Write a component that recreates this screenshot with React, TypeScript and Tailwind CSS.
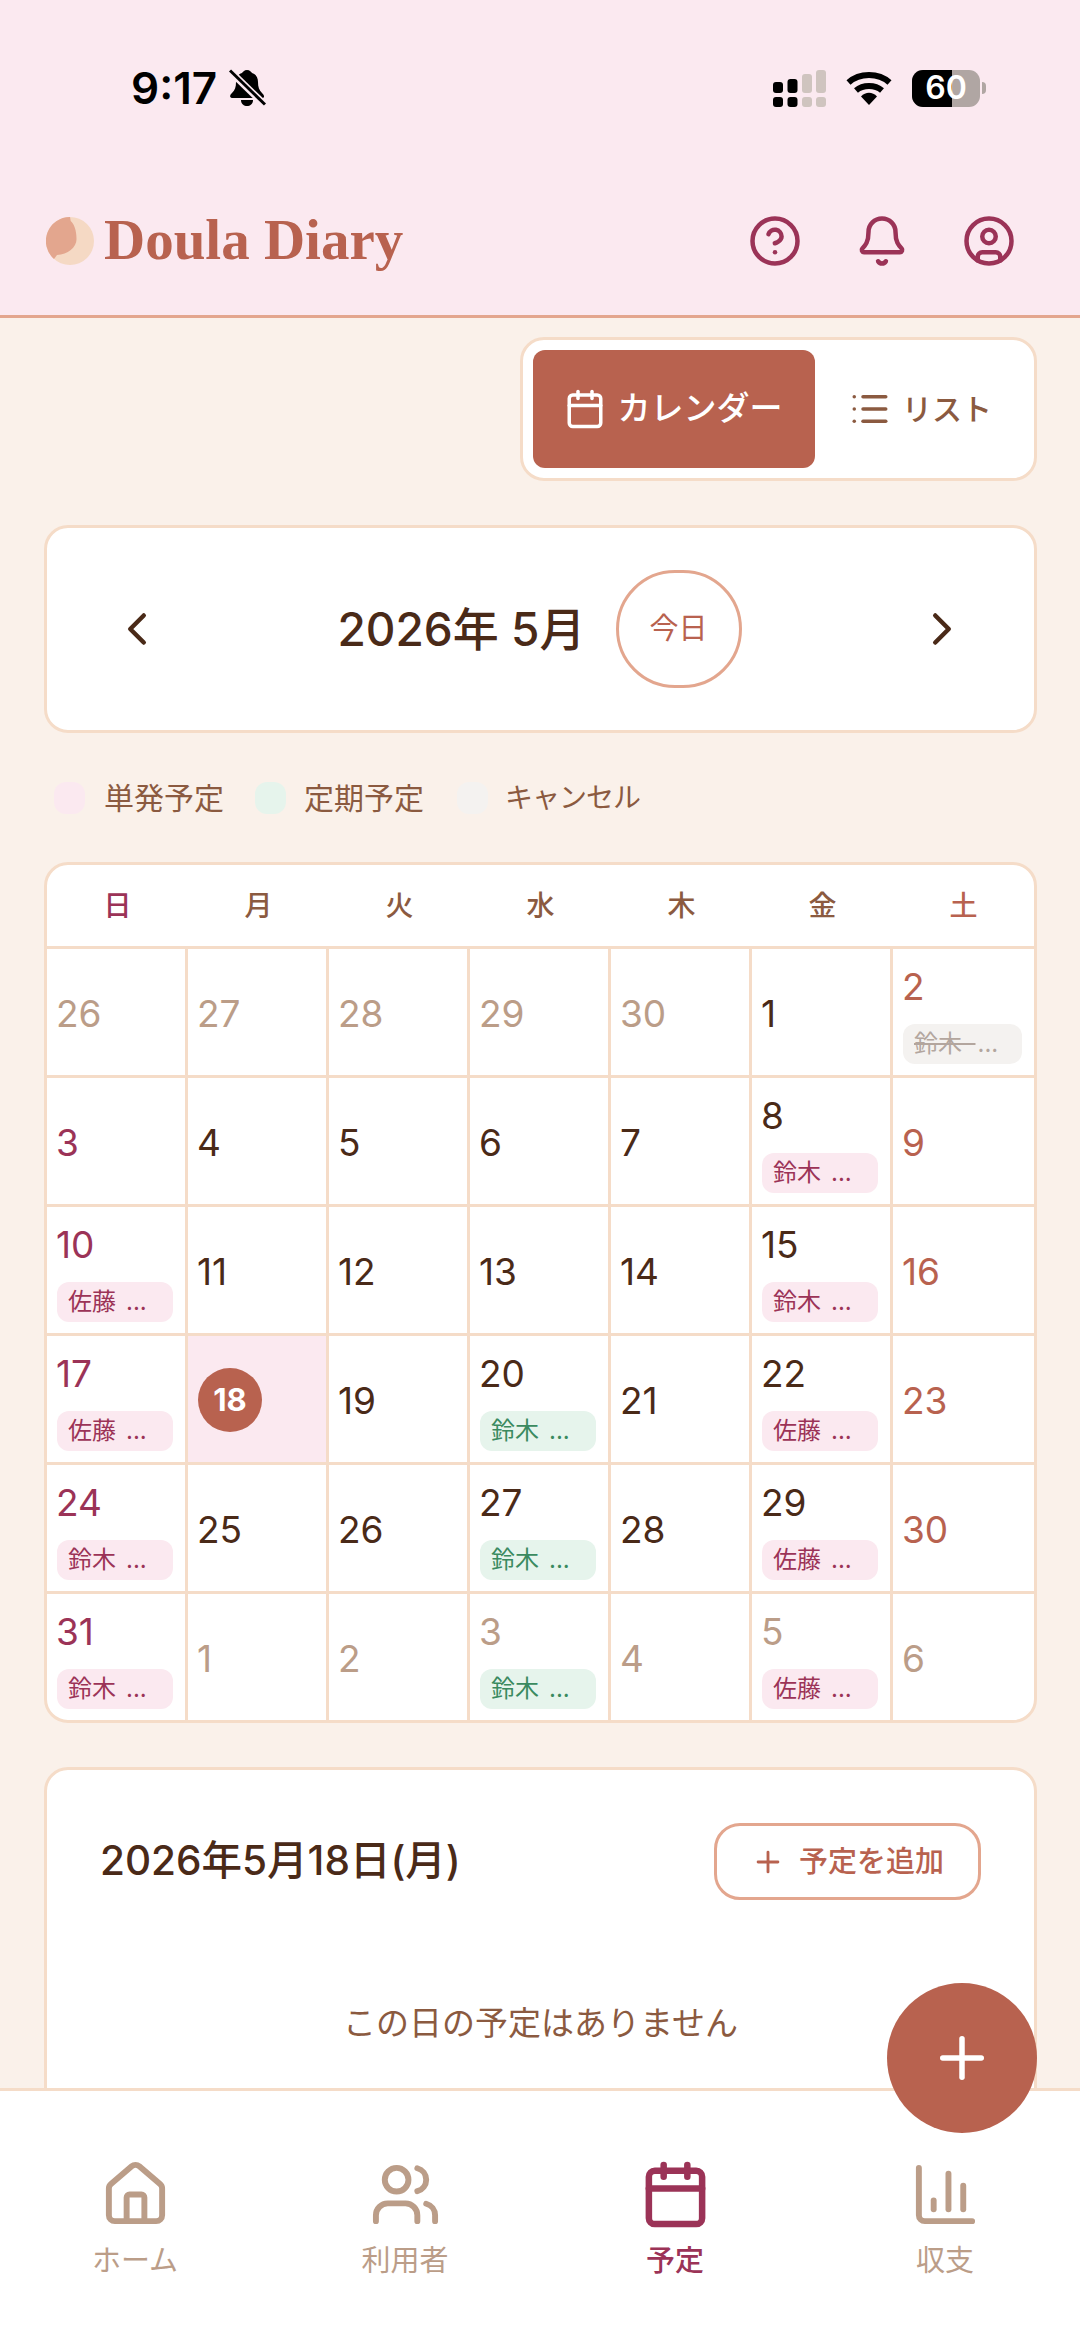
import React from "react";
import { ChevronLeft, ChevronRight, CircleQuestionMark, Bell, CircleUser, Calendar, List, Plus, House, Users, ChartColumn } from "lucide-react";

type Chip = { name: string; kind: "pink" | "green" | "cancel" };
type Day = { n: number; muted?: boolean; chip?: Chip; today?: boolean };

const S: Chip = { name: "佐藤", kind: "pink" };
const P: Chip = { name: "鈴木", kind: "pink" };
const G: Chip = { name: "鈴木", kind: "green" };
const X: Chip = { name: "鈴木", kind: "cancel" };

const days: Day[] = [
  { n: 26, muted: true }, { n: 27, muted: true }, { n: 28, muted: true }, { n: 29, muted: true }, { n: 30, muted: true }, { n: 1 }, { n: 2, chip: X },
  { n: 3 }, { n: 4 }, { n: 5 }, { n: 6 }, { n: 7 }, { n: 8, chip: P }, { n: 9 },
  { n: 10, chip: S }, { n: 11 }, { n: 12 }, { n: 13 }, { n: 14 }, { n: 15, chip: P }, { n: 16 },
  { n: 17, chip: S }, { n: 18, today: true }, { n: 19 }, { n: 20, chip: G }, { n: 21 }, { n: 22, chip: S }, { n: 23 },
  { n: 24, chip: P }, { n: 25 }, { n: 26 }, { n: 27, chip: G }, { n: 28 }, { n: 29, chip: S }, { n: 30 },
  { n: 31, chip: P }, { n: 1, muted: true }, { n: 2, muted: true }, { n: 3, muted: true, chip: G }, { n: 4, muted: true }, { n: 5, muted: true, chip: S }, { n: 6, muted: true },
];

function ChipView({ chip }: { chip: Chip }) {
  if (chip.kind === "cancel") {
    return (
      <div className="mt-[10px] flex h-[40px] w-full items-center overflow-hidden whitespace-pre rounded-[12px] bg-[#f4f2f0] pl-[11px] text-[24px] text-[#b3a69e]">
        <span className="line-through">{chip.name + "\u00a0\u00a0"}</span>
        <span className="ml-[2px]">...</span>
      </div>
    );
  }
  const cls = chip.kind === "pink" ? "bg-[#fbe9f0] text-[#9b3357]" : "bg-[#e6f4ec] text-[#3a8a5f]";
  return (
    <div className={`mt-[10px] flex h-[40px] w-full items-center overflow-hidden whitespace-pre rounded-[12px] pl-[11px] text-[24px] ${cls}`}>
      <span>{chip.name}</span>
      <span className="ml-[10px]">...</span>
    </div>
  );
}

function Cell({ d, col, last }: { d: Day; col: number; last: boolean }) {
  let color = "text-[#4a2a18]";
  if (d.muted) color = "text-[#bb9d88]";
  else if (col === 0) color = "text-[#9b3357]";
  else if (col === 6) color = "text-[#b8624f]";
  return (
    <div
      className={`flex flex-col justify-center border-[#f5dcc8] pl-[10px] pr-[12px] ${col < 6 ? "border-r-[3px]" : ""} ${last ? "h-[126px]" : "h-[129px] border-b-[3px]"} ${d.today ? "bg-[#fbe9f0]" : ""}`}
    >
      {d.today ? (
        <div className="mt-[2px] flex h-[64px] w-[64px] items-center justify-center rounded-full bg-[#b8624f] text-[31px] font-bold text-white">{d.n}</div>
      ) : (
        <div className={`-ml-[1px] h-[54px] text-[37px] leading-[54px] ${d.chip ? "" : "mt-[3px]"} ${color}`}>{d.n}</div>
      )}
      {d.chip && <ChipView chip={d.chip} />}
    </div>
  );
}

function Signal() {
  const black = "#000";
  const gray = "#cfc4bf";
  return (
    <svg width="53" height="37" viewBox="0 0 53 37">
      <rect x="0" y="12" width="10" height="11" rx="3" fill={black} />
      <rect x="14.5" y="9" width="10" height="14" rx="3" fill={black} />
      <rect x="29" y="4" width="10" height="19" rx="3" fill={gray} />
      <rect x="43" y="0" width="10" height="23" rx="3" fill={gray} />
      <rect x="0" y="27" width="10" height="10" rx="3" fill={black} />
      <rect x="14.5" y="27" width="10" height="10" rx="3" fill={black} />
      <rect x="29" y="27" width="10" height="10" rx="3" fill={gray} />
      <rect x="43" y="27" width="10" height="10" rx="3" fill={gray} />
    </svg>
  );
}

function Wifi() {
  return (
    <svg width="46" height="34" viewBox="0 0 46 34" fill="none">
      <path d="M2.5 11.5C13.5 1.5 32.5 1.5 43.5 11.5" stroke="#000" strokeWidth="6" />
      <path d="M10 19.5C17 13.5 29 13.5 36 19.5" stroke="#000" strokeWidth="6" />
      <path d="M15 25.5C19.5 20.5 26.5 20.5 31 25.5L23 34Z" fill="#000" />
    </svg>
  );
}

function BellOff() {
  return (
    <svg width="37" height="38" viewBox="0 0 37 38">
      <path d="M18 1c3 0 4 2 5 3 4 1 6 5 6 9 0 5 1 8 4 11 2 2 3 4 1 5H3c-3-1-2-3 0-5 3-3 4-6 4-11 0-4 2-8 6-9 1-1 2-3 5-3z" fill="#000" />
      <path d="M12 31h12c0 4-3 6-6 6s-6-2-6-6z" fill="#000" />
      <path d="M1 2l35 34" stroke="#fbe9f0" strokeWidth="7" />
      <path d="M1 1.5l35 34" stroke="#000" strokeWidth="3" />
    </svg>
  );
}

function Battery() {
  return (
    <div className="flex items-center">
      <div className="relative h-[37px] w-[68px] overflow-hidden rounded-[11px] bg-[#b0a6a3]">
        <div className="absolute left-0 top-0 h-full w-[40px] bg-black" />
        <div className="absolute inset-0 flex items-center justify-center text-[32px] font-semibold text-white">60</div>
      </div>
      <div className="ml-[2px] h-[12px] w-[4px] rounded-r-full bg-[#b0a6a3]" />
    </div>
  );
}

function Logo() {
  return (
    <svg width="48" height="48" viewBox="0 0 48 48">
      <circle cx="24" cy="24" r="24" fill="#f5d9c4" />
      <path d="M24 0A24 24 0 0 0 8 42L11 38C22 38 31 30 30.5 21.7 30.5 13 28 7 24.7 4Z" fill="#e3a68e" />
    </svg>
  );
}

function NavItem({ label, active, children }: { label: string; active?: boolean; children: React.ReactNode }) {
  return (
    <div className={`flex flex-col items-center ${active ? "text-[#9b3357]" : "text-[#bb9d88]"}`}>
      {children}
      <div className={`mt-[11px] text-[29px] leading-[40px] ${active ? "font-medium" : ""}`}>{label}</div>
    </div>
  );
}

export default function App() {
  const week = ["日", "月", "火", "水", "木", "金", "土"];
  return (
    <div className="relative flex h-[2348px] w-[1080px] flex-col overflow-hidden bg-[#faf1ea] font-[Inter,'Noto_Sans_CJK_JP',sans-serif] text-[#4a2a18]">
      <header className="h-[318px] shrink-0 border-b-[3px] border-[#e3a68e] bg-[#fbe9f0]">
        <div className="flex h-[176px] items-center justify-between pl-[131px] pr-[94px]">
          <div className="flex items-center gap-[12px]">
            <span className="text-[44px] font-semibold leading-none text-black">9:17</span>
            <BellOff />
          </div>
          <div className="flex items-center gap-[20px]">
            <Signal />
            <Wifi />
            <Battery />
          </div>
        </div>
        <div className="flex h-[130px] items-center justify-between pl-[46px] pr-[64px]">
          <div className="flex items-center gap-[10px]">
            <Logo />
            <span className="mb-[3px] font-['Liberation_Serif',serif] text-[57px] font-bold leading-none text-[#b8624f]">Doula Diary</span>
          </div>
          <div className="flex items-center gap-[53px] text-[#9b3357]">
            <CircleQuestionMark size={54} />
            <Bell size={54} />
            <CircleUser size={54} />
          </div>
        </div>
      </header>

      <main className="relative flex min-h-0 flex-1 flex-col overflow-hidden pl-[44px] pr-[43px] pt-[19px]">
        <div className="flex h-[144px] w-[517px] shrink-0 self-end rounded-[24px] border-[3px] border-[#f5dcc8] bg-white p-[10px]">
          <div className="flex w-[282px] items-center justify-center gap-[12px] rounded-[12px] bg-[#b8624f] pr-[2px] text-[33px] font-medium text-white">
            <Calendar size={42} />
            <span>カレンダー</span>
          </div>
          <div className="flex flex-1 items-center justify-center gap-[11px] pl-[2px] text-[30px] font-medium text-[#8b5a40]">
            <List size={42} />
            <span>リスト</span>
          </div>
        </div>

        <div className="mt-[44px] flex h-[208px] shrink-0 items-center rounded-[24px] border-[3px] border-[#f5dcc8] bg-white pl-[63px] pr-[65px]">
          <ChevronLeft size={54} />
          <div className="flex flex-1 items-center justify-center gap-[30px]">
            <span className="text-[46px] font-medium">2026年 5月</span>
            <div className="flex h-[118px] w-[126px] items-center justify-center rounded-full border-[3px] border-[#e3a68e] text-[29px] text-[#b8624f]">今日</div>
          </div>
          <ChevronRight size={54} />
        </div>

        <div className="mb-[48px] mt-[49px] flex h-[32px] shrink-0 items-center pl-[10px] text-[30px] text-[#8b5a40]">
          <div className="h-[32px] w-[31px] rounded-[12px] bg-[#fbe9f0]" />
          <span className="ml-[19px]">単発予定</span>
          <div className="ml-[31px] h-[32px] w-[31px] rounded-[12px] bg-[#e6f4ec]" />
          <span className="ml-[18px]">定期予定</span>
          <div className="ml-[33px] h-[32px] w-[31px] rounded-[12px] bg-[#f4f2f0]" />
          <span className="ml-[17px] text-[28px] tracking-[-1px]">キャンセル</span>
        </div>

        <div className="shrink-0 overflow-hidden rounded-[24px] border-[3px] border-[#f5dcc8] bg-white">
          <div className="grid h-[84px] grid-cols-7 items-center border-b-[3px] border-[#f5dcc8]">
            {week.map((w, i) => (
              <div key={w} className={`text-center text-[28px] font-medium ${i === 0 ? "text-[#9b3357]" : i === 6 ? "text-[#b8624f]" : "text-[#8b5a40]"}`}>{w}</div>
            ))}
          </div>
          <div className="grid grid-cols-7">
            {days.map((d, i) => (
              <Cell key={i} d={d} col={i % 7} last={i >= 35} />
            ))}
          </div>
        </div>

        <div className="mt-[44px] h-[500px] shrink-0 rounded-[24px] border-[3px] border-[#f5dcc8] bg-white px-[53px] pt-[53px]">
          <div className="flex h-[77px] items-center justify-between">
            <span className="text-[40.5px] font-medium">2026年5月18日(月)</span>
            <div className="flex h-[77px] w-[267px] items-center justify-center gap-[14px] rounded-[26px] border-[3px] border-[#e3a68e] text-[29px] font-medium text-[#b8624f]">
              <Plus size={34} />
              <span>予定を追加</span>
            </div>
          </div>
          <div className="mt-[98px] text-center text-[33px] leading-[50px] text-[#8b5a40]">この日の予定はありません</div>
        </div>
      </main>

      <nav className="grid h-[260px] shrink-0 grid-cols-4 border-t-[3px] border-[#f5dcc8] bg-white pt-[68px]">
        <NavItem label="ホーム"><House size={71} strokeWidth={2} /></NavItem>
        <NavItem label="利用者"><Users size={71} strokeWidth={2} /></NavItem>
        <NavItem label="予定" active><Calendar size={71} strokeWidth={2.2} /></NavItem>
        <NavItem label="収支"><ChartColumn size={71} strokeWidth={2} /></NavItem>
      </nav>

      <div className="absolute left-[887px] top-[1983px] flex h-[150px] w-[150px] items-center justify-center rounded-full bg-[#b8624f] text-white">
        <Plus size={66} strokeWidth={2} />
      </div>
    </div>
  );
}
